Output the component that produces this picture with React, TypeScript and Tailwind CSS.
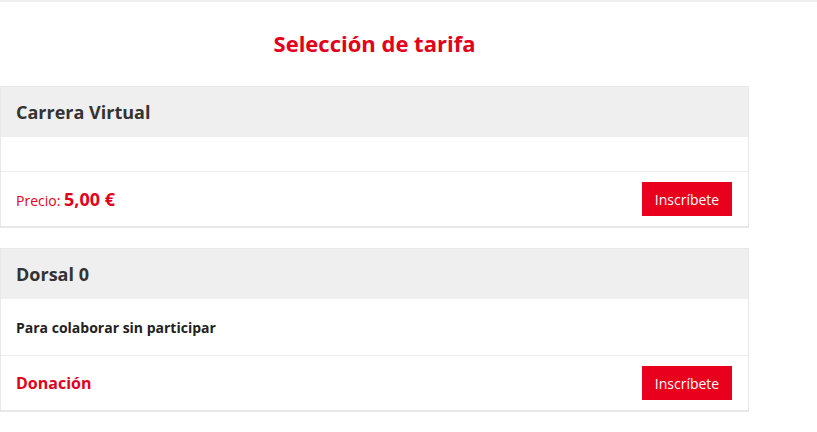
export default function App() {
  const font = { fontFamily: '"Open Sans", "Liberation Sans", sans-serif' };
  return (
    <div className="min-h-[432px] bg-white border-t-2 border-[#efefef]" style={font}>
      <div className="w-[749px]">
        <h1 className="pt-[26px] pb-[28px] text-center text-[22px] leading-[30px] font-bold text-[#e2001a]">
          Selección de tarifa
        </h1>

        <div className="border border-b-2 border-[#e8e8e8]">
          <div className="h-[50px] bg-[#efefef] flex items-center px-[15px]">
            <h2 className="text-[18px] font-bold text-[#333]">Carrera Virtual</h2>
          </div>
          <div className="h-[35px] border-b border-[#eeeeee]" />
          <div className="h-[54px] flex items-center justify-between px-[15px]">
            <p className="text-[#e2001a] text-[14px]">
              Precio: <span className="text-[18px] font-bold">5,00 €</span>
            </p>
            <button className="w-[90px] h-[34px] mr-[1px] bg-[#e8001c] text-white text-[14px]">
              Inscríbete
            </button>
          </div>
        </div>

        <div className="mt-[20px] border border-b-2 border-[#e8e8e8]">
          <div className="h-[50px] bg-[#efefef] flex items-center px-[15px]">
            <h2 className="text-[18px] font-bold text-[#333]">Dorsal 0</h2>
          </div>
          <div className="h-[57px] border-b border-[#eeeeee] flex items-center px-[15px]">
            <p className="text-[14px] font-bold text-[#222]">Para colaborar sin participar</p>
          </div>
          <div className="h-[54px] flex items-center justify-between px-[15px]">
            <p className="text-[#e2001a] text-[16px] font-bold">Donación</p>
            <button className="w-[90px] h-[34px] mr-[1px] bg-[#e8001c] text-white text-[14px]">
              Inscríbete
            </button>
          </div>
        </div>
      </div>
    </div>
  );
}
